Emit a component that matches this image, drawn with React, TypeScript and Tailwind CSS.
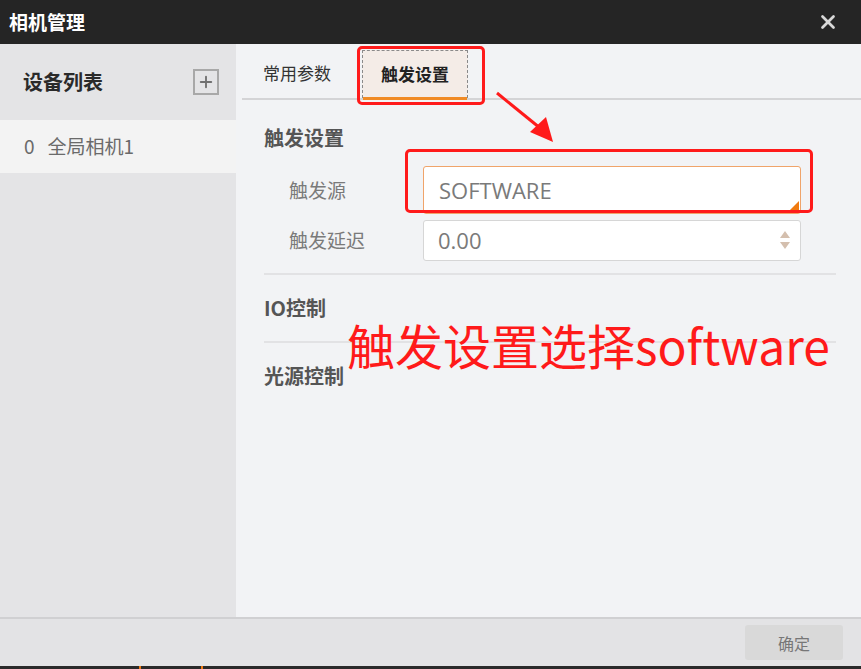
import { X, Plus } from 'lucide-react';

const cjk = { fontFamily: '"Noto Sans CJK SC", "Noto Sans", sans-serif' };
const latin = { fontFamily: '"Open Sans", "Noto Sans", sans-serif' };

function Field({ label, children }: { label: string; children: React.ReactNode }) {
  return (
    <div className="flex items-center">
      <div className="w-[159px] pl-[25px] text-[19px] text-[#7a7a7a]">{label}</div>
      {children}
    </div>
  );
}

export default function App() {
  return (
    <div className="relative w-[861px] h-[669px] overflow-hidden flex flex-col bg-[#f2f3f5]" style={cjk}>
      {/* title bar */}
      <div className="h-[44px] bg-[#252525] flex items-center justify-between pl-[9px] pr-[22px] shrink-0">
        <span className="text-white text-[19px] font-bold">相机管理</span>
        <X className="w-[22px] h-[22px] text-[#d8d8d8]" strokeWidth={3} />
      </div>

      <div className="flex flex-1 min-h-0">
        {/* device list */}
        <div className="w-[236px] bg-[#e4e4e6] flex flex-col shrink-0">
          <div className="h-[76px] flex items-center justify-between pl-[23px] pr-[17px]">
            <span className="text-[20px] font-bold text-[#2a2a2a]">设备列表</span>
            <div className="w-[26px] h-[26px] border-2 border-[#a8a8a8] flex items-center justify-center">
              <Plus className="w-[18px] h-[18px] text-[#707070]" strokeWidth={2.5} />
            </div>
          </div>
          <div className="h-[53px] bg-[#f3f3f3] flex items-center pl-[24px] text-[19px] text-[#6a6a6a]">
            <span className="mr-[13px]">0</span>全局相机1
          </div>
        </div>

        {/* settings */}
        <div className="flex-1 flex flex-col">
          <div className="h-[56px] flex items-end ml-[6px] border-b-2 border-[#d4d4d6]">
            <div className="w-[120px] h-[48px] flex items-center pl-[21px] pb-[2px] text-[17px] text-[#333]">常用参数</div>
            <div className="w-[106px] h-[48px] bg-[#f4ece7] border border-dashed border-[#8a8a8a] border-b-0 relative flex items-center justify-center pb-[2px] text-[17px] font-bold text-[#222]">
              触发设置
              <div className="absolute left-0 right-0 -bottom-[2px] h-[3px] bg-[#f08a24]" />
            </div>
          </div>

          <div className="pl-[28px] pr-[25px]">
            <div className="h-[66px] pt-[26px] leading-[24px] text-[20px] font-bold text-[#555]">触发设置</div>
            <div className="flex flex-col gap-[6px]">
              <Field label="触发源">
                <div className="relative w-[378px] h-[48px] bg-white border border-[#f0a46a] rounded-[3px] flex items-center pl-[15px] text-[22px] text-[#7a7a7a]" style={latin}>
                  SOFTWARE
                  <div className="absolute right-[1px] bottom-[1px] w-0 h-0 border-l-[11px] border-l-transparent border-b-[11px] border-b-[#f07a10]" />
                </div>
              </Field>
              <Field label="触发延迟">
                <div className="relative w-[378px] h-[41px] bg-white border border-[#d6d6d6] rounded-[3px] flex items-center pl-[14px] text-[22px] text-[#7a7a7a]" style={latin}>
                  0.00
                  <div className="absolute right-[10px] top-[10px] flex flex-col gap-[4px]">
                    <div className="w-0 h-0 border-x-[5px] border-x-transparent border-b-[7px] border-b-[#d4bfae]" />
                    <div className="w-0 h-0 border-x-[5px] border-x-transparent border-t-[7px] border-t-[#d4bfae]" />
                  </div>
                </div>
              </Field>
            </div>
            <div className="mt-[12px] border-t-2 border-[#e2e2e4]" />
            <div className="h-[66px] flex items-center text-[20px] font-bold text-[#555]">IO控制</div>
            <div className="border-t-2 border-[#e2e2e4]" />
            <div className="h-[66px] flex items-center text-[20px] font-bold text-[#555]">光源控制</div>
          </div>
        </div>
      </div>

      {/* footer */}
      <div className="h-[49px] bg-[#e3e3e5] border-t-2 border-[#d0d0d2] flex items-center justify-end pr-[18px] shrink-0">
        <div className="w-[98px] h-[35px] bg-[#d9d9d9] rounded-[3px] flex items-center justify-center text-[16px] text-[#777]">确定</div>
      </div>
      <div className="h-[3px] bg-[#2a2a2a] relative shrink-0">
        <div className="absolute left-[139px] top-0 w-[2px] h-[3px] bg-[#f07a10]" />
        <div className="absolute left-[201px] top-0 w-[2px] h-[3px] bg-[#f07a10]" />
      </div>

      {/* annotations */}
      <div className="absolute left-[357px] top-[46px] w-[128px] h-[59px] border-[3px] border-[#ff1a1a] rounded-[5px]" />
      <div className="absolute left-[405px] top-[149px] w-[408px] h-[64px] border-[3px] border-[#ff1a1a] rounded-[5px]" />
      <svg className="absolute left-0 top-0" width="861" height="669">
        <line x1="497" y1="93" x2="540" y2="128" stroke="#ff1a1a" strokeWidth="3" />
        <polygon points="553,142 530,132 546,117" fill="#ff1a1a" />
      </svg>
      <div className="absolute left-[347px] top-[315px] text-[48px] leading-[58px] text-[#ff1a1a] whitespace-nowrap">触发设置选择software</div>
    </div>
  );
}
